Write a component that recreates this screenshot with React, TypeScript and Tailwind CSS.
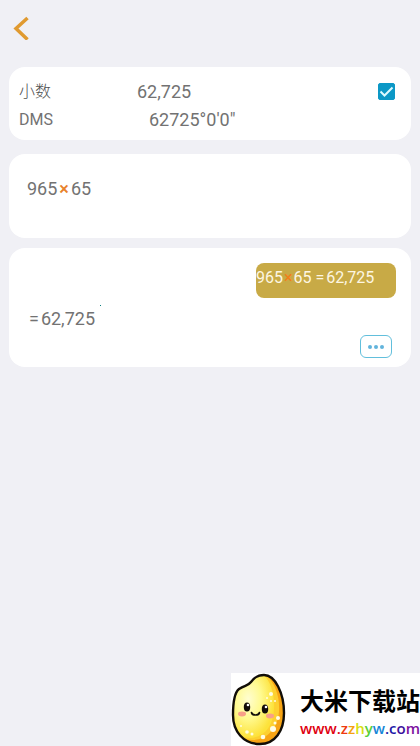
import * as React from 'react';

type CardProps = {
  className?: string;
  children: React.ReactNode;
};

const Card: React.FC<CardProps> = ({ className = '', children }) => (
  <section className={`rounded-2xl bg-white ${className}`}>{children}</section>
);

const Times: React.FC<{ className: string }> = ({ className }) => (
  <span className={`font-medium ${className}`}>×</span>
);

const grainPath =
  'M33 2C44 2 53 20 53 40C53 58 44 71 29 71C12 71 2 58 2 42C2 30 3 20 8 16C14 12 17 13 20 9C23 5 26 2 33 2Z';

const RiceMascot: React.FC = () => (
  <svg viewBox="0 0 55 73" className="h-[73px] w-[55px] shrink-0" aria-hidden="true">
    <defs>
      <radialGradient id="rice" cx="0.4" cy="0.4" r="0.6">
        <stop offset="0" stopColor="#fffdd0" />
        <stop offset="0.5" stopColor="#fffa90" />
        <stop offset="1" stopColor="#fde23a" />
      </radialGradient>
      <clipPath id="grain">
        <path d={grainPath} />
      </clipPath>
    </defs>
    <g clipPath="url(#grain)">
      <rect width="55" height="73" fill="#f7a414" />
      <path d="M33 0C43 8 49 22 48 38C47 54 38 66 22 67C8 67 0 58 0 46V0Z" fill="#fdd031" />
      <path d="M31 0C39 7 44 20 43 36C42 53 34 64 19 65C8 65 0 58 0 46V0Z" fill="url(#rice)" />
      <g fill="#fffde4">
        <circle cx="40" cy="21" r="2" />
        <circle cx="36" cy="25" r="1" />
        <circle cx="40" cy="28" r="1" />
        <circle cx="44" cy="28" r="1" />
        <circle cx="47" cy="45" r="2" />
        <circle cx="44" cy="50" r="1.5" />
        <circle cx="42" cy="56" r="3" />
        <circle cx="32" cy="64" r="2.3" />
        <circle cx="16" cy="59" r="1.8" />
        <circle cx="21" cy="61" r="1.5" />
        <circle cx="10" cy="53" r="1" />
      </g>
    </g>
    <path d={grainPath} fill="none" stroke="#120e08" strokeWidth="2.4" />
    <ellipse cx="11" cy="41" rx="4" ry="2.4" fill="#f8a088" />
    <ellipse cx="39" cy="43" rx="4" ry="2.4" fill="#f8a088" />
    <ellipse cx="16" cy="34" rx="3.2" ry="4.6" fill="#120c08" />
    <ellipse cx="34" cy="36" rx="3.2" ry="4.6" fill="#120c08" />
    <circle cx="17" cy="32" r="1.3" fill="#fff" />
    <circle cx="35" cy="34" r="1.3" fill="#fff" />
    <path
      d="M20.500 39.500Q21 42 24.500 42Q28 42 28.500 39.500"
      fill="none"
      stroke="#120e08"
      strokeWidth="1.700"
      strokeLinecap="round"
    />
  </svg>
);

const siteLetters = [
  { text: 'www.', color: 'text-[#e00010]' },
  { text: 'z', color: 'text-[#ee3a10]' },
  { text: 'z', color: 'text-[#f5a010]' },
  { text: 'h', color: 'text-[#d8e010]' },
  { text: 'y', color: 'text-[#58cf38]' },
  { text: 'w', color: 'text-[#1686d8]' },
  { text: '.c', color: 'text-[#1c18a8]' },
  { text: 'o', color: 'text-[#3a109c]' },
  { text: 'm', color: 'text-[#7c10a0]' },
];

export default function App() {
  const [decimal, setDecimal] = React.useState(true);

  return (
    <div className="flex min-h-screen flex-col bg-[#f0f0f5] font-[Roboto,'Noto_Sans_CJK_SC',sans-serif] text-[#727272]">
      <header className="flex h-[67px] items-start px-3 pt-4">
        <button type="button" aria-label="返回" className="flex h-6 w-5 items-center">
          <svg viewBox="0 0 20 24" className="h-6 w-5" fill="none" stroke="#e09a30" strokeWidth="3.5">
            <path d="M15.500 2L4 12.500L15.500 23.500" strokeLinejoin="miter" />
          </svg>
        </button>
      </header>

      <main className="flex flex-col px-[9px]">
        <Card className="px-[10px] pt-[11px] pb-[6px]">
          <div className="flex h-7 items-center">
            <label htmlFor="decimal" className="w-[118px] text-base font-light text-[#505050]">
              小数
            </label>
            <span className="text-lg">62,725</span>
            <span className="relative mr-[6px] mb-[2px] ml-auto flex size-[17px]">
              <input
                id="decimal"
                type="checkbox"
                checked={decimal}
                onChange={(e) => setDecimal(e.target.checked)}
                className="peer size-[17px] appearance-none rounded-xs border border-[#0c98c6] checked:bg-[#0c98c6]"
              />
              <svg
                viewBox="0 0 17 17"
                className="pointer-events-none absolute inset-0 hidden size-[17px] peer-checked:block"
                fill="none"
                stroke="#dcfaff"
                strokeWidth="2"
              >
                <path d="M2.500 8.500L6.500 12.500L14.500 4.500" />
              </svg>
            </span>
          </div>
          <div className="flex h-7 items-center">
            <span className="w-[130px] text-base">DMS</span>
            <span className="text-lg">62725°0'0"</span>
          </div>
        </Card>

        <Card className="mt-[14px] h-[84px] px-[18px] pt-[21px] text-lg">
          965
          <Times className="mx-[2px] text-[#e8822c]" />
          65
        </Card>

        <Card className="mt-[10px] flex flex-col pt-[15px] pr-[15px] pb-[9px] pl-5">
          <div className="h-[35px] w-[140px] self-end rounded-lg bg-[#c8aa46] pt-[3px] text-base text-[#fdf6e2]">
            965
            <Times className="mx-px text-[#f2801c]" />
            65 <span className="mr-[2px]">=</span>62,725
          </div>
          <div className="mt-[7px] flex text-lg">
            <span className="mr-[2px]">=</span>
            <span>62,725</span>
            <i className="ml-[5px] size-px bg-[#0c8080]" />
          </div>
          <button
            type="button"
            aria-label="更多"
            className="mt-[2px] mr-1 flex h-[23px] w-8 items-center justify-center gap-[2px] self-end rounded-md border border-[#62bfdc]"
          >
            <i className="size-1 rounded-full bg-[#62b4dc]" />
            <i className="size-1 rounded-full bg-[#62b4dc]" />
            <i className="size-1 rounded-full bg-[#62b4dc]" />
          </button>
        </Card>
      </main>

      <footer className="mt-auto flex h-[73px] w-[189px] items-start self-end overflow-hidden bg-white">
        <RiceMascot />
        <div className="ml-[14px] flex flex-col pt-[15px] whitespace-nowrap">
          <span className="text-2xl leading-7 font-bold text-black">大米下载站</span>
          <a
            href="#"
            className="font-['Open_Sans',sans-serif] text-[15px] leading-6 font-semibold"
          >
            {siteLetters.map(({ text, color }, i) => (
              <span key={i} className={color}>
                {text}
              </span>
            ))}
          </a>
        </div>
      </footer>
    </div>
  );
}
